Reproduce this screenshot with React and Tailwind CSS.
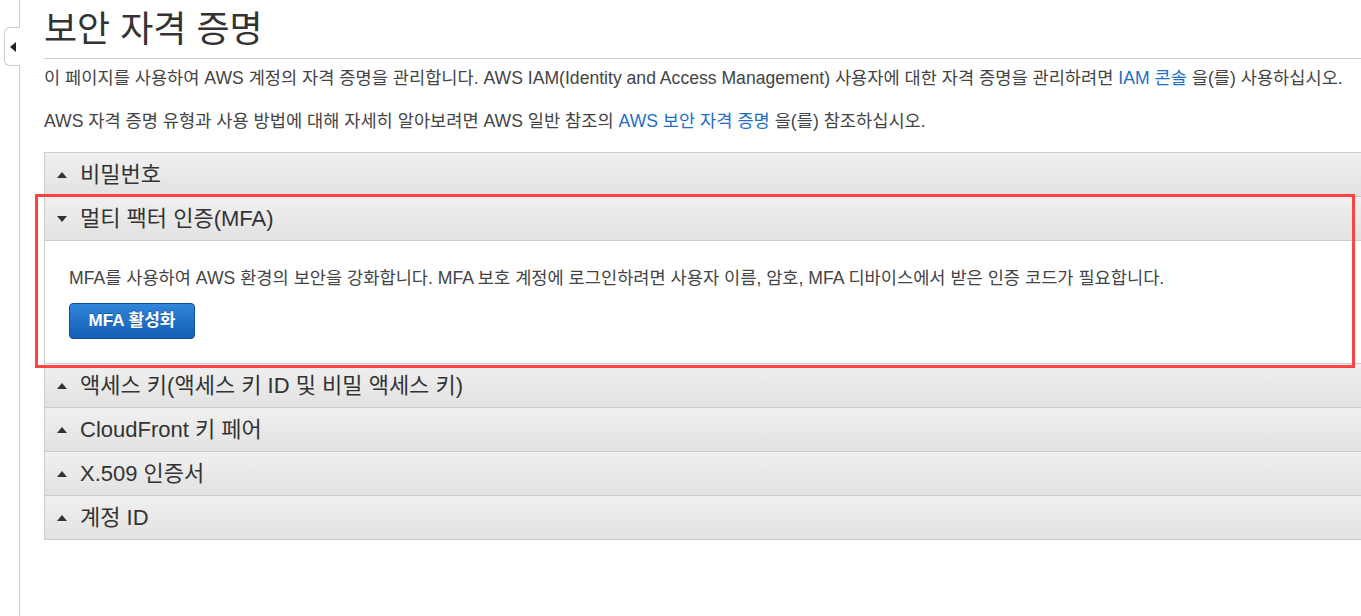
import React from 'react';

const font = { fontFamily: '"Liberation Sans", "Noto Sans CJK KR", sans-serif' };

const sections = [
  { title: '비밀번호', open: false },
  { title: '멀티 팩터 인증(MFA)', open: true },
  { title: '액세스 키(액세스 키 ID 및 비밀 액세스 키)', open: false },
  { title: 'CloudFront 키 페어', open: false },
  { title: 'X.509 인증서', open: false },
  { title: '계정 ID', open: false },
];

const Caret = ({ open }) => (
  <svg width="10" height="6" viewBox="0 0 10 6" className="shrink-0">
    {open ? <path d="M0 0 H10 L5 6 Z" fill="#333" /> : <path d="M5 0 L10 6 H0 Z" fill="#333" />}
  </svg>
);

const App = () => {
  return (
    <div className="relative h-[616px] w-[1361px] overflow-hidden bg-white text-[#444]" style={font}>
      {/* sidebar edge */}
      <div className="absolute left-[19px] top-0 h-full w-px bg-[#cccccc]" />
      <button className="absolute left-[4px] top-[27px] flex h-[39px] w-[16px] items-center justify-center rounded-l-[6px] border border-r-0 border-[#cccccc] bg-white">
        <svg width="6" height="10" viewBox="0 0 6 10">
          <path d="M6 0 V10 L0 5 Z" fill="#222" />
        </svg>
      </button>

      <div className="ml-[44px] w-[1400px]">
        <h1 className="pt-[9px] text-[36px] leading-[42px] text-[#333]">보안 자격 증명</h1>
        <div className="mt-[7px] h-px bg-[#cccccc]" />
        <p className="mt-[7px] text-[17.6px] leading-[24px]">
          이 페이지를 사용하여 AWS 계정의 자격 증명을 관리합니다. AWS IAM(Identity and Access Management) 사용자에 대한 자격 증명을 관리하려면{' '}
          <a className="text-[#1f6fc5]">IAM 콘솔</a> 을(를) 사용하십시오.
        </p>
        <p className="mt-[19px] text-[17.6px] leading-[24px]">
          AWS 자격 증명 유형과 사용 방법에 대해 자세히 알아보려면 AWS 일반 참조의{' '}
          <a className="text-[#1f6fc5]">AWS 보안 자격 증명</a> 을(를) 참조하십시오.
        </p>

        <div className="mt-[19px] border border-b-0 border-[#cccccc]">
          {sections.map((s) => (
            <div key={s.title}>
              <div className="flex h-[44px] items-center gap-[13px] border-b border-[#cccccc] bg-gradient-to-b from-[#f0f0f0] to-[#e2e2e2] pl-[12px] text-[22px] text-[#333]">
                <Caret open={s.open} />
                <span>{s.title}</span>
              </div>
              {s.open && (
                <div className="h-[123px] border-b border-[#cccccc] bg-white pl-[24px] pt-[25px]">
                  <p className="text-[17.6px] leading-[24px]">
                    MFA를 사용하여 AWS 환경의 보안을 강화합니다. MFA 보호 계정에 로그인하려면 사용자 이름, 암호, MFA 디바이스에서 받은 인증 코드가 필요합니다.
                  </p>
                  <button className="mt-[13px] h-[36px] w-[126px] rounded-[4px] border border-[#0d4f98] bg-gradient-to-b from-[#2f86da] to-[#145fb5] text-[17px] font-bold text-white [text-shadow:0_-1px_0_rgba(0,0,0,0.3)]">
                    MFA 활성화
                  </button>
                </div>
              )}
            </div>
          ))}
        </div>
      </div>

      {/* highlight annotation */}
      <div className="pointer-events-none absolute left-[35px] top-[194px] h-[174px] w-[1320px] border-[3px] border-[#ff4242]" />
    </div>
  );
};

export default App;
